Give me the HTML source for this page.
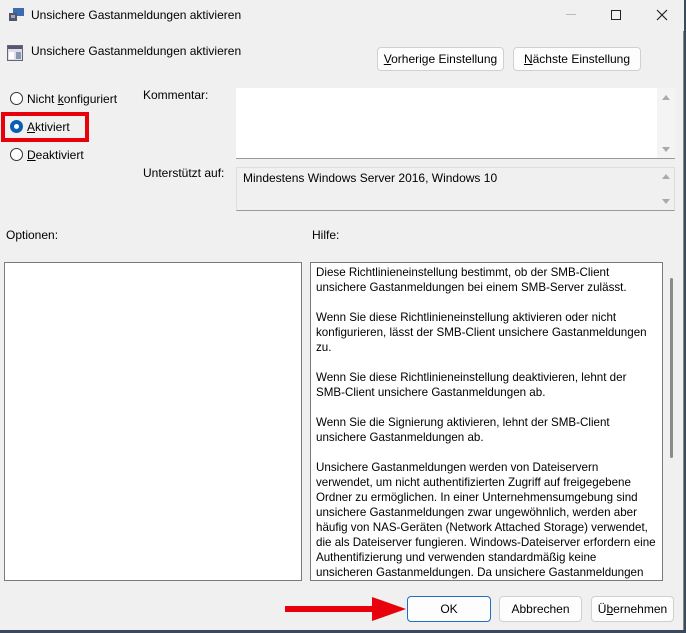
<!DOCTYPE html>
<html><head><meta charset="utf-8"><style>
*{margin:0;padding:0;box-sizing:border-box}
body{width:686px;height:633px;background:#3a4a5c;font-family:"Liberation Sans",sans-serif;font-size:12px;color:#000;position:relative;overflow:hidden}
.win{position:absolute;left:0;top:0;width:684px;height:630px;background:#f0f0f0;border-right:1px solid #888;}
.a{position:absolute;white-space:nowrap}
.btn{position:absolute;background:#fdfdfd;border:1px solid #d0d0d0;border-radius:4px;text-align:center;font-size:12px}
.box{position:absolute;background:#fff;border:1px solid #7a7a7a}
.radio{position:absolute;width:13px;height:13px;border:1px solid #333;border-radius:50%;background:#fff}
u{text-decoration:underline}
.arr{position:absolute;width:0;height:0;border-style:solid;border-color:transparent}
</style></head><body>
<div class="win">
 <div class="a" style="left:0;top:0;width:684px;height:31px;background:#f0f0f0"></div>
 <svg class="a" style="left:9px;top:8px" width="16" height="14"><rect x="4" y="0" width="11" height="8" fill="#3b6bb0"/><rect x="0" y="5" width="8" height="8" fill="#556" /><rect x="2" y="7" width="4" height="3" fill="#9ac"/></svg>
 <div class="a" style="left:31px;top:8px;font-size:12px">Unsichere Gastanmeldungen aktivieren</div>
 <div class="a" style="left:566px;top:14px;width:10px;height:1px;background:#bbb"></div>
 <div class="a" style="left:611px;top:10px;width:10px;height:10px;border:1px solid #222"></div>
 <svg class="a" style="left:656px;top:9px" width="12" height="12"><path d="M1 1L11 11M11 1L1 11" stroke="#222" stroke-width="1.2"/></svg>

 <svg class="a" style="left:7px;top:45px" width="16" height="16"><rect x="0.5" y="0.5" width="15" height="15" fill="#dde" stroke="#667"/><rect x="1" y="1" width="14" height="3" fill="#557"/><rect x="2" y="7" width="5" height="7" fill="#fff"/><rect x="9" y="7" width="5" height="7" fill="#89a"/></svg>
 <div class="a" style="left:31px;top:44px">Unsichere Gastanmeldungen aktivieren</div>
 <div class="btn" style="left:377px;top:47px;width:127px;height:24px;line-height:22px"><u>V</u>orherige Einstellung</div>
 <div class="btn" style="left:513px;top:47px;width:128px;height:24px;line-height:22px"><u>N</u>ächste Einstellung</div>

 <div class="radio" style="left:10px;top:92px"></div>
 <div class="a" style="left:27px;top:92px">Nicht <u>k</u>onfiguriert</div>
 <div class="a" style="left:1px;top:112px;width:88px;height:30px;border:4px solid #e8000b"></div>
 <div class="radio" style="left:10px;top:120px;border:4px solid #0a5fb4;background:#fff"></div>
 <div class="a" style="left:27px;top:120px"><u>A</u>ktiviert</div>
 <div class="radio" style="left:10px;top:148px"></div>
 <div class="a" style="left:27px;top:148px"><u>D</u>eaktiviert</div>

 <div class="a" style="left:143px;top:88px">Kommentar:</div>
 <div class="a" style="left:236px;top:88px;width:439px;height:71px;background:#fff;border-bottom:1px solid #999"></div>
 <div class="a" style="left:657px;top:88px;width:18px;height:70px;background:#f4f4f4"></div>
 <div class="arr" style="left:662px;top:95px;border-width:0 4px 5px;border-bottom-color:#aaa"></div>
 <div class="arr" style="left:662px;top:147px;border-width:5px 4px 0;border-top-color:#aaa"></div>

 <div class="a" style="left:143px;top:166px">Unterstützt auf:</div>
 <div class="a" style="left:236px;top:167px;width:439px;height:44px;background:#f0f0f0;border:1px solid #ddd;border-bottom:1px solid #999"></div>
 <div class="a" style="left:243px;top:171px">Mindestens Windows Server 2016, Windows 10</div>
 <div class="arr" style="left:662px;top:174px;border-width:0 4px 5px;border-bottom-color:#aaa"></div>
 <div class="arr" style="left:662px;top:199px;border-width:5px 4px 0;border-top-color:#aaa"></div>

 <div class="a" style="left:6px;top:228px">Optionen:</div>
 <div class="a" style="left:312px;top:228px">Hilfe:</div>
 <div class="box" style="left:4px;top:262px;width:298px;height:319px"></div>
 <div class="box" style="left:310px;top:262px;width:353px;height:319px;overflow:hidden">
  <div style="position:absolute;left:5px;top:2px;line-height:15px;font-size:11.6px;white-space:nowrap">
Diese Richtlinieneinstellung bestimmt, ob der SMB-Client<br>unsichere Gastanmeldungen bei einem SMB-Server zulässt.<br><br>Wenn Sie diese Richtlinieneinstellung aktivieren oder nicht<br>konfigurieren, lässt der SMB-Client unsichere Gastanmeldungen<br>zu.<br><br>Wenn Sie diese Richtlinieneinstellung deaktivieren, lehnt der<br>SMB-Client unsichere Gastanmeldungen ab.<br><br>Wenn Sie die Signierung aktivieren, lehnt der SMB-Client<br>unsichere Gastanmeldungen ab.<br><br>Unsichere Gastanmeldungen werden von Dateiservern<br>verwendet, um nicht authentifizierten Zugriff auf freigegebene<br>Ordner zu ermöglichen. In einer Unternehmensumgebung sind<br>unsichere Gastanmeldungen zwar ungewöhnlich, werden aber<br>häufig von NAS-Geräten (Network Attached Storage) verwendet,<br>die als Dateiserver fungieren. Windows-Dateiserver erfordern eine<br>Authentifizierung und verwenden standardmäßig keine<br>unsicheren Gastanmeldungen. Da unsichere Gastanmeldungen
  </div>
 </div>
 <div class="a" style="left:670px;top:278px;width:3px;height:180px;background:#8a8a8a;border-radius:2px"></div>

 <div class="a" style="left:285px;top:606px;width:90px;height:6px;background:#e8000b"></div>
 <div class="arr" style="left:372px;top:597px;border-width:12px 0 12px 34px;border-left-color:#e8000b"></div>
 <div class="btn" style="left:407px;top:596px;width:84px;height:26px;line-height:24px;border:1px solid #1d6ec5;background:#fdfdfd">OK</div>
 <div class="btn" style="left:499px;top:596px;width:83px;height:26px;line-height:24px">Abbrechen</div>
 <div class="btn" style="left:591px;top:596px;width:83px;height:26px;line-height:24px">Ü<u>b</u>ernehmen</div>
</div>
</body></html>
